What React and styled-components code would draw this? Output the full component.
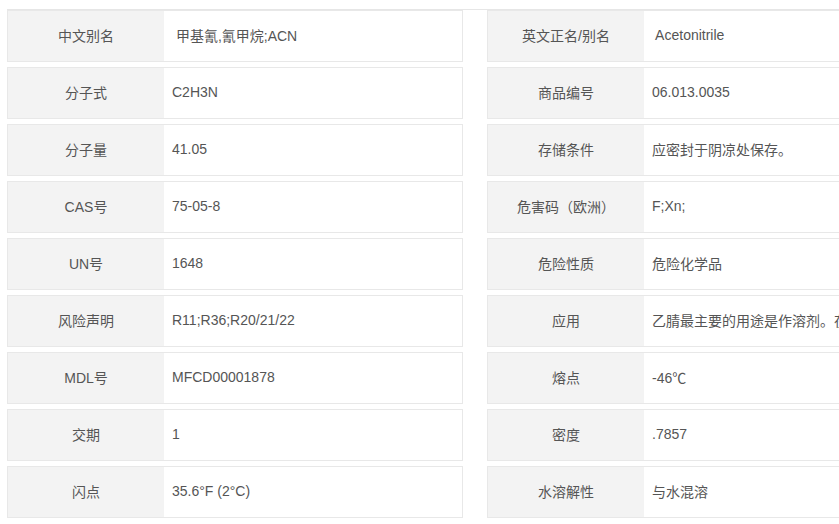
import React from "react"
import styled, { createGlobalStyle } from "styled-components"

const rows = [
  ["中文别名", " 甲基氰,氰甲烷;ACN", "英文正名/别名", " Acetonitrile"],
  ["分子式", "C2H3N", "商品编号", "06.013.0035"],
  ["分子量", "41.05", "存储条件", "应密封于阴凉处保存。"],
  ["CAS号", "75-05-8", "危害码（欧洲）", "F;Xn;"],
  ["UN号", "1648", "危险性质", "危险化学品"],
  ["风险声明", "R11;R36;R20/21/22", "应用", "乙腈最主要的用途是作溶剂。在制药工业中用作合成维生素的溶剂"],
  ["MDL号", "MFCD00001878", "熔点", "-46℃"],
  ["交期", "1", "密度", ".7857"],
  ["闪点", "35.6°F (2°C)", "水溶解性", "与水混溶"],
]

const App = () => (
  <>
    <GlobalStyle />
    <PropList>
      {rows.map(([k1, v1, k2, v2]) => (
        <React.Fragment key={k1}>
          <Item>
            <Label>{k1}</Label>
            <Value>{v1}</Value>
          </Item>
          <Item>
            <Label>{k2}</Label>
            <Value>{v2}</Value>
          </Item>
        </React.Fragment>
      ))}
    </PropList>
  </>
)

const GlobalStyle = createGlobalStyle`
  html, body {
    margin: 0;
    overflow: hidden;
    background: #fff;
  }
  body {
    font-family: "Liberation Sans", "Noto Sans CJK SC", sans-serif;
  }
`

const PropList = styled.div`
  margin: 9px 0 0 7px;
  border-top: 1px solid #e6e6e6;
  width: 936px;
  display: grid;
  grid-template-columns: 456px 456px;
  column-gap: 24px;
  row-gap: 5px;
`

const Item = styled.div`
  display: flex;
  height: 52px;
  box-sizing: border-box;
  border: 1px solid #e8e8e8;
  overflow: hidden;
`

const Label = styled.div`
  flex: 0 0 156px;
  display: flex;
  align-items: center;
  justify-content: center;
  padding-bottom: 2px;
  background: #f3f3f3;
  color: #555;
  font-size: 14px;
`

const Value = styled.div`
  flex: 1;
  display: flex;
  align-items: center;
  padding: 0 0 2px 8px;
  color: #555;
  font-size: 14px;
  white-space: pre;
  overflow: hidden;
`

export default App
